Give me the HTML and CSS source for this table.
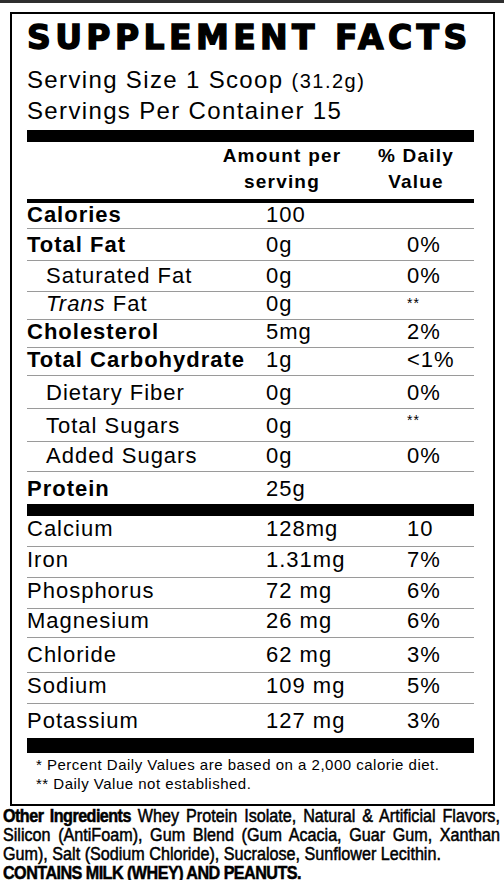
FILE: index.html
```html
<!DOCTYPE html>
<html lang="en">
<head>
    <meta charset="UTF-8">
    <meta name="viewport" content="width=device-width, initial-scale=1.0">
    <title>Supplement Facts</title>
    <link rel="stylesheet" href="styles.css">
</head>
<body>
    <div class="top-strip"></div>

    <div class="label">
        <h1 class="title">SUPPLEMENT FACTS</h1>
        <p class="serving">Serving Size 1 Scoop <span class="weight">(31.2g)</span></p>
        <p class="serving">Servings Per Container 15</p>

        <div class="bar bar-top"></div>

        <div class="head">
            <span class="head-amount">Amount per<br>serving</span>
            <span class="head-dv">% Daily<br>Value</span>
        </div>

        <div class="bar bar-head"></div>

        <div class="rows">
            <div class="row h26"><span class="name bold">Calories</span><span>100</span><span></span></div>
            <div class="row h32"><span class="name bold">Total Fat</span><span>0g</span><span>0%</span></div>
            <div class="row h31"><span class="name sub">Saturated Fat</span><span>0g</span><span>0%</span></div>
            <div class="row h28"><span class="name sub"><em>Trans</em> Fat</span><span>0g</span><span class="stars">**</span></div>
            <div class="row h28"><span class="name bold">Cholesterol</span><span>5mg</span><span>2%</span></div>
            <div class="row h28"><span class="name bold">Total Carbohydrate</span><span>1g</span><span>&lt;1%</span></div>
            <div class="row h33"><span class="name sub">Dietary Fiber</span><span>0g</span><span>0%</span></div>
            <div class="row h33"><span class="name sub">Total Sugars</span><span>0g</span><span class="stars">**</span></div>
            <div class="row h30"><span class="name sub">Added Sugars</span><span>0g</span><span>0%</span></div>
            <div class="row h32"><span class="name bold">Protein</span><span>25g</span><span></span></div>
        </div>

        <div class="bar bar-mid"></div>

        <div class="rows minerals">
            <div class="row h31"><span class="name">Calcium</span><span>128mg</span><span>10</span></div>
            <div class="row h31"><span class="name">Iron</span><span>1.31mg</span><span>7%</span></div>
            <div class="row h31"><span class="name">Phosphorus</span><span>72 mg</span><span>6%</span></div>
            <div class="row h29"><span class="name">Magnesium</span><span>26 mg</span><span>6%</span></div>
            <div class="row h35"><span class="name">Chloride</span><span>62 mg</span><span>3%</span></div>
            <div class="row h31"><span class="name">Sodium</span><span>109 mg</span><span>5%</span></div>
            <div class="row h34"><span class="name">Potassium</span><span>127 mg</span><span>3%</span></div>
        </div>

        <div class="bar bar-bottom"></div>

        <div class="notes">
            <p>* Percent Daily Values are based on a 2,000 calorie diet.</p>
            <p>** Daily Value not established.</p>
        </div>
    </div>

    <div class="ingredients">
        <div class="ingredients-text">
            <p class="line full"><strong>Other Ingredients</strong> Whey Protein Isolate, Natural &amp; Artificial Flavors,</p>
            <p class="line full">Silicon (AntiFoam), Gum Blend (Gum Acacia, Guar Gum, Xanthan</p>
            <p class="line">Gum), Salt (Sodium Chloride), Sucralose, Sunflower Lecithin.</p>
            <p class="line"><strong>CONTAINS MILK (WHEY) AND PEANUTS.</strong></p>
        </div>
    </div>
</body>
</html>
```

FILE: styles.css
```css
body {
    margin: 0;
    padding: 0;
    background-color: #fff;
    color: #000;
    font-family: "Liberation Sans", Arial, sans-serif;
}

p {
    margin: 0;
}

.top-strip {
    height: 3px;
    background-color: #2e2e2e;
}

.label {
    width: 485px;
    box-sizing: border-box;
    margin: 9px 0 0 10px;
    padding: 0 19px 0 15px;
    border: 2px solid #000;
}

.title {
    margin: 6px 0 9px 0;
    font-family: "DejaVu Sans", sans-serif;
    font-size: 33px;
    font-weight: bold;
    line-height: 36px;
    letter-spacing: 4.4px;
    -webkit-text-stroke: 1.4px #000;
    white-space: nowrap;
}

.serving {
    font-size: 24px;
    line-height: 30px;
    letter-spacing: 1.35px;
}

.serving .weight {
    font-size: 20px;
    letter-spacing: 1.5px;
}

.bar {
    background-color: #000;
}

.bar-top {
    height: 12px;
    margin-top: 4px;
}

.bar-head {
    height: 4px;
}

.bar-mid {
    height: 12px;
}

.bar-bottom {
    height: 15px;
}

.head {
    display: flex;
    justify-content: flex-end;
    padding: 1px 18px 4px 0;
    font-size: 19px;
    font-weight: bold;
    line-height: 26px;
    letter-spacing: 1.2px;
    text-align: center;
}

.head-amount {
    width: 160px;
    margin-right: 14px;
}

.head-dv {
    width: 80px;
}

.row {
    display: grid;
    grid-template-columns: 239px 141px 1fr;
    align-items: end;
    box-sizing: border-box;
    height: 31px;
    padding-bottom: 3px;
    border-bottom: 1px solid #9a9a9a;
    font-size: 22px;
    line-height: 24px;
    letter-spacing: 1px;
    white-space: nowrap;
}

.row:last-child {
    border-bottom: none;
}

.minerals .row {
    padding-bottom: 5px;
}

.h26 { height: 26px; }
.h28 { height: 28px; }
.h29 { height: 29px; }
.h30 { height: 30px; }
.h31 { height: 31px; }
.h32 { height: 32px; }
.h33 { height: 33px; }
.h34 { height: 34px; }
.h35 { height: 35px; }

.h26 {
    padding-bottom: 2px;
}

.name.bold {
    font-weight: bold;
}

.name.sub {
    padding-left: 19px;
}

.stars {
    align-self: start;
    padding-top: 4px;
    font-size: 14px;
    line-height: 14px;
}

.notes {
    padding: 2px 0 11px 9px;
    font-size: 15px;
    line-height: 19px;
    letter-spacing: 0.5px;
}

/* condensed look: Arial metrics squeezed horizontally */
.ingredients {
    width: 497px;
    margin-left: 3px;
    padding-top: 1px;
    overflow: hidden;
}

.ingredients-text {
    width: 554px;
    transform: scaleX(0.897);
    transform-origin: left top;
    font-size: 18px;
    line-height: 19px;
    -webkit-text-stroke: 0.5px #000;
}

.ingredients strong {
    letter-spacing: -0.6px;
}

.ingredients .line {
    white-space: nowrap;
}

.ingredients .line.full {
    text-align: justify;
    text-align-last: justify;
}
```
